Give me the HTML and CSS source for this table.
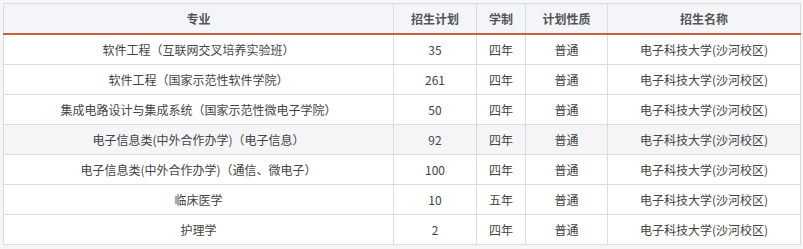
FILE: index.html
```html
<!DOCTYPE html>
<html lang="zh-CN">
<head>
<meta charset="utf-8">
<link rel="stylesheet" href="styles.css">
</head>
<body>
<table class="plan">
  <colgroup>
    <col class="c-major">
    <col class="c-num">
    <col class="c-years">
    <col class="c-type">
    <col class="c-school">
  </colgroup>
  <thead>
    <tr><th>专业</th><th>招生计划</th><th>学制</th><th>计划性质</th><th>招生名称</th></tr>
  </thead>
  <tbody>
    <tr><td>软件工程（互联网交叉培养实验班）</td><td>35</td><td>四年</td><td>普通</td><td>电子科技大学(沙河校区)</td></tr>
    <tr><td>软件工程（国家示范性软件学院）</td><td>261</td><td>四年</td><td>普通</td><td>电子科技大学(沙河校区)</td></tr>
    <tr><td>集成电路设计与集成系统（国家示范性微电子学院）</td><td>50</td><td>四年</td><td>普通</td><td>电子科技大学(沙河校区)</td></tr>
    <tr class="hover"><td>电子信息类(中外合作办学)（电子信息）</td><td>92</td><td>四年</td><td>普通</td><td>电子科技大学(沙河校区)</td></tr>
    <tr><td>电子信息类(中外合作办学)（通信、微电子）</td><td>100</td><td>四年</td><td>普通</td><td>电子科技大学(沙河校区)</td></tr>
    <tr><td>临床医学</td><td>10</td><td>五年</td><td>普通</td><td>电子科技大学(沙河校区)</td></tr>
    <tr><td>护理学</td><td>2</td><td>四年</td><td>普通</td><td>电子科技大学(沙河校区)</td></tr>
  </tbody>
</table>
</body>
</html>
```
FILE: styles.css
```css
html, body {
  margin: 0;
  padding: 0;
  background: #f6f6f7;
}
body {
  padding: 3px 3px 0 3px;
  font-family: "Noto Sans CJK SC", "Noto Sans", sans-serif;
  font-size: 12px;
  color: #333;
}
.plan {
  width: 797px;
  table-layout: fixed;
  border-collapse: collapse;
  background: #fff;
  border: 1px solid #dcdcdf;
}
.c-major { width: 390px; }
.c-num { width: 83px; }
.c-years { width: 49px; }
.c-type { width: 82px; }
.c-school { width: 193px; }
.plan th,
.plan td {
  border: 1px solid #dcdcdf;
  text-align: center;
  padding: 0;
  white-space: nowrap;
}
.plan th {
  height: 29px;
  background: #f3f5f9;
  color: #555;
  font-weight: bold;
  border-bottom: 2px solid #c8603c;
}
.plan td {
  height: 29px;
  color: #444;
}
.plan tr.hover td {
  background: #f5f5f7;
}
```
